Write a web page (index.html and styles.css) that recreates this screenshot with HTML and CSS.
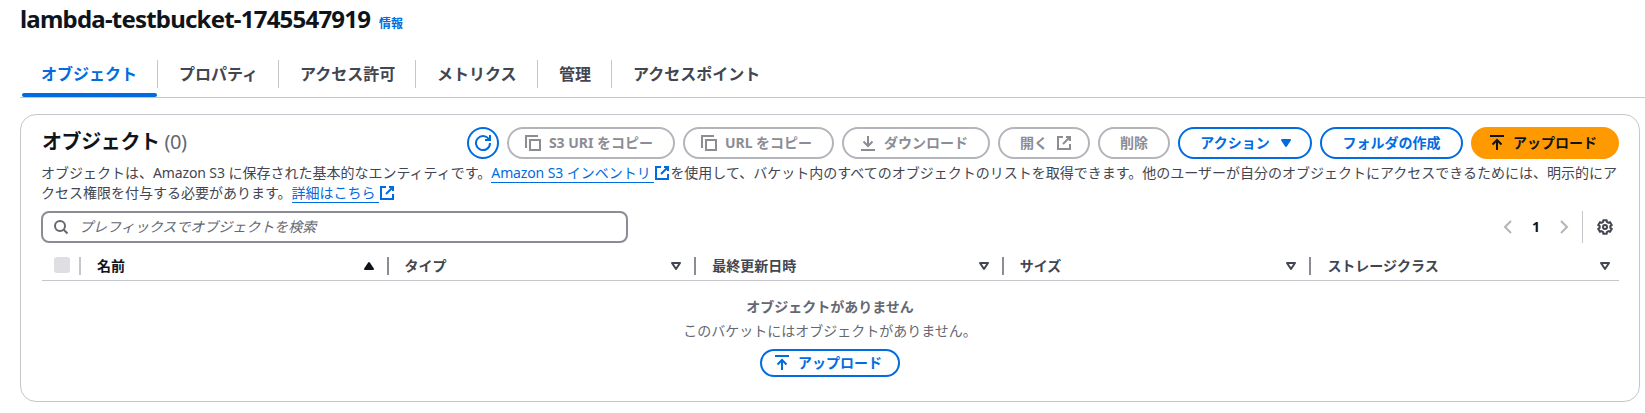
FILE: index.html
```html
<!DOCTYPE html>
<html lang="ja">
<head>
<meta charset="utf-8">
<title>lambda-testbucket-1745547919</title>
<link rel="stylesheet" href="styles.css">
</head>
<body>
<svg class="defs" width="0" height="0">
  <symbol id="copy" viewBox="0 0 16 16"><path d="M1 13V1h12M5 5h10v10H5z"/></symbol>
  <symbol id="refresh" viewBox="0 0 16 16"><path d="M10 5h5V0M15 8a7 7 0 1 1-.7-3"/></symbol>
  <symbol id="external" viewBox="0 0 16 16"><path d="M14 9v5H2V2h5M10 2h4v4M7 9l7-7"/></symbol>
  <symbol id="download" viewBox="0 0 16 16"><path d="M1 15h14M8 1v10M3.500 6.500 8 11l4.500-4.500"/></symbol>
  <symbol id="upload" viewBox="0 0 16 16"><path d="M1 1h14M8 15V5M3.500 9.500 8 5l4.500 4.500"/></symbol>
  <symbol id="search" viewBox="0 0 16 16"><circle cx="7" cy="7" r="5"/><path d="m10.500 10.500 4 4"/></symbol>
  <symbol id="left" viewBox="0 0 16 16"><path d="M11 2 5 8l6 6"/></symbol>
  <symbol id="right" viewBox="0 0 16 16"><path d="m5 2 6 6-6 6"/></symbol>
  <symbol id="caret" viewBox="0 0 16 16"><path stroke-linejoin="round" d="M4 5h8l-4 6z"/></symbol>
  <symbol id="gear" viewBox="-8 -8 16 16"><path d="M-1.850-5.070-1.690-6.790H1.690L1.850-5.070 3.470-4.140 5.040-4.860 6.730-1.930 5.320-.93V.93L6.730 1.930 5.040 4.860 3.470 4.140 1.850 5.070 1.690 6.790H-1.690L-1.850 5.070-3.470 4.140-5.040 4.860-6.730 1.930-5.320.93V-.93L-6.730-1.930-5.040-4.860-3.470-4.140z"/><circle r="2"/></symbol>
</svg>

<header class="title">
  <h1>lambda-testbucket-1745547919</h1>
  <a class="info">情報</a>
</header>

<nav class="tabs">
  <a class="tab active">オブジェクト</a>
  <a class="tab t-props">プロパティ</a>
  <a class="tab t-perms">アクセス許可</a>
  <a class="tab t-metrics">メトリクス</a>
  <a class="tab t-manage">管理</a>
  <a class="tab">アクセスポイント</a>
</nav>

<main class="panel">
  <div class="toolbar">
    <h2>オブジェクト <span class="count">(0)</span></h2>
    <div class="actions">
      <button class="btn round"><svg class="icon"><use href="#refresh"/></svg></button>
      <button class="btn off lead w-s3"><svg class="icon"><use href="#copy"/></svg>S3 URI をコピー</button>
      <button class="btn off lead w-url"><svg class="icon"><use href="#copy"/></svg>URL をコピー</button>
      <button class="btn off lead w-download"><svg class="icon"><use href="#download"/></svg>ダウンロード</button>
      <button class="btn off trail w-open">開く<svg class="icon"><use href="#external"/></svg></button>
      <button class="btn off w-delete">削除</button>
      <button class="btn trail w-actions">アクション<svg class="icon solid"><use href="#caret"/></svg></button>
      <button class="btn w-folder">フォルダの作成</button>
      <button class="btn primary lead w-upload"><svg class="icon"><use href="#upload"/></svg>アップロード</button>
    </div>
  </div>

  <p class="description"><span class="line">オブジェクトは、<span class="latin">Amazon S3</span> に保存された基本的なエンティティです。<a class="link"><span class="latin">Amazon S3</span> インベントリ </a><svg class="icon ext"><use href="#external"/></svg>を使用して、バケット内のすべてのオブジェクトのリストを取得できます。他のユーザーが自分のオブジェクトにアクセスできるためには、明示的にア</span><span class="line">クセス権限を付与する必要があります。<a class="link">詳細はこちら </a><svg class="icon ext"><use href="#external"/></svg></span></p>

  <div class="tools">
    <div class="search"><svg class="icon"><use href="#search"/></svg><span>プレフィックスでオブジェクトを検索</span></div>
    <div class="pager">
      <svg class="icon arrow"><use href="#left"/></svg>
      <span class="page">1</span>
      <svg class="icon arrow"><use href="#right"/></svg>
      <span class="settings"><svg class="icon gear"><use href="#gear"/></svg></span>
    </div>
  </div>

  <div class="thead">
    <div class="th check"><span class="box"></span></div>
    <div class="th sorted">名前<svg class="icon solid flip"><use href="#caret"/></svg></div>
    <div class="th">タイプ<svg class="icon"><use href="#caret"/></svg></div>
    <div class="th">最終更新日時<svg class="icon"><use href="#caret"/></svg></div>
    <div class="th">サイズ<svg class="icon"><use href="#caret"/></svg></div>
    <div class="th last">ストレージクラス<svg class="icon"><use href="#caret"/></svg></div>
  </div>

  <div class="empty">
    <strong>オブジェクトがありません</strong>
    <span>このバケットにはオブジェクトがありません。</span>
    <button class="btn lead small"><svg class="icon"><use href="#upload"/></svg>アップロード</button>
  </div>
</main>
</body>
</html>
```
FILE: styles.css
```css
* { box-sizing: border-box; }
body {
  margin: 0;
  padding: 0 5px 0 20px;
  height: 413px;
  overflow: hidden;
  background: #fff;
  color: #424650;
  font: 14px/20px "Noto Sans", "Noto Sans CJK JP", sans-serif;
}
.defs { display: none; }
h1, h2, p { margin: 0; }

.icon {
  width: 16px;
  height: 16px;
  flex: none;
  fill: none;
  stroke: currentColor;
  stroke-width: 2;
  overflow: visible;
}
.solid { fill: currentColor; }

.title { display: flex; align-items: baseline; gap: 9px; height: 60px; padding-top: 4px; }
h1 { width: 350px; color: #0f141a; font-size: 24px; font-weight: 700; line-height: 30px; letter-spacing: -0.79px; white-space: nowrap; }
.info { color: #006ce0; font-size: 12px; font-weight: 700; }

.tabs {
  display: flex;
  align-items: flex-start;
  height: 38px;
  margin-right: -5px;
  padding-left: 1px;
  border-bottom: 1px solid #c6c6cd;
}
.tab {
  position: relative;
  height: 28px;
  padding-left: 21px;
  border-right: 1px solid #c6c6cd;
  font-size: 16px;
  font-weight: 700;
  line-height: 28px;
  white-space: nowrap;
}
.tab:last-child { border-right: 0; }
.t-props { width: 121px; }
.t-perms { width: 137px; }
.t-metrics { width: 122px; }
.t-manage { width: 74px; }
.active { width: 137px; padding-left: 20px; color: #006ce0; }
.active::after {
  content: "";
  position: absolute;
  left: 1px;
  right: 0;
  bottom: -9px;
  height: 4px;
  border-radius: 4px;
  background: #006ce0;
}

.panel {
  height: 288px;
  margin-top: 16px;
  padding: 12px 20px 0;
  border: 1px solid #c6c6cd;
  border-radius: 16px;
}
.toolbar { display: flex; justify-content: space-between; height: 36px; }
h2 { padding-left: 1px; color: #0f141a; font-size: 20px; line-height: 30px; letter-spacing: -0.4px; }
.count { color: #656871; font-weight: 400; }
.actions { display: flex; gap: 8px; }
.btn {
  display: flex;
  align-items: center;
  justify-content: center;
  gap: 8px;
  height: 32px;
  padding: 0;
  border: 2px solid #006ce0;
  border-radius: 20px;
  background: #fff;
  color: #006ce0;
  font: inherit;
  font-weight: 700;
  white-space: nowrap;
}
.off { border-color: #b4b4bb; color: #8c8c94; }
.primary { border-color: #ff9900; background: #ff9900; color: #0f141a; }
.lead { padding-right: 4px; }
.trail { padding-left: 4px; }
.round { width: 32px; }
.w-s3 { width: 168px; }
.w-url { width: 151px; }
.w-download { width: 148px; }
.w-open { width: 92px; }
.w-delete { width: 72px; }
.w-actions { width: 134px; }
.w-folder { width: 143px; }
.w-upload { width: 148px; }

.description { height: 48px; white-space: nowrap; }
.line { display: block; height: 20px; }
.latin { letter-spacing: -0.13px; }
.link { border-bottom: 1px solid #006ce0; color: #006ce0; white-space: pre; }
.ext { color: #006ce0; vertical-align: -3px; }

.tools { display: flex; justify-content: space-between; height: 32px; }
.search {
  display: flex;
  align-items: center;
  gap: 10px;
  width: 587px;
  padding-left: 10px;
  border: 2px solid #8c8c94;
  border-radius: 8px;
  color: #656871;
  font-style: italic;
}
.pager { display: flex; align-items: center; }
.arrow { color: #b4b4bb; }
.page { width: 40px; color: #0f141a; font-weight: 700; text-align: center; }
.settings {
  display: flex;
  align-items: center;
  height: 32px;
  margin-left: 10px;
  padding: 0 6px 0 14px;
  border-left: 1px solid #c6c6cd;
}
.gear { stroke-linejoin: round; }

.thead {
  display: flex;
  height: 38px;
  margin-left: 1px;
  padding-top: 14px;
  border-bottom: 1px solid #c6c6cd;
}
.th {
  display: flex;
  flex: none;
  align-items: center;
  justify-content: space-between;
  width: 307.6px;
  height: 18px;
  padding: 0 10px 0 16px;
  border-right: 2px solid #8c8c94;
  font-weight: 700;
}
.check { width: 39px; padding: 0 0 2px 12px; border-color: #c6c6cd; }
.box { width: 16px; height: 16px; border-radius: 3px; background: #dedee3; }
.sorted { color: #0f141a; }
.flip { transform: scaleY(-1); }
.last { flex: 1; padding-right: 6px; border: 0; }

.empty {
  display: flex;
  flex-direction: column;
  align-items: center;
  padding-top: 16px;
  color: #656871;
}
.empty span { margin: 4px 0 8px; }
.small { width: 140px; height: 28px; }
```
